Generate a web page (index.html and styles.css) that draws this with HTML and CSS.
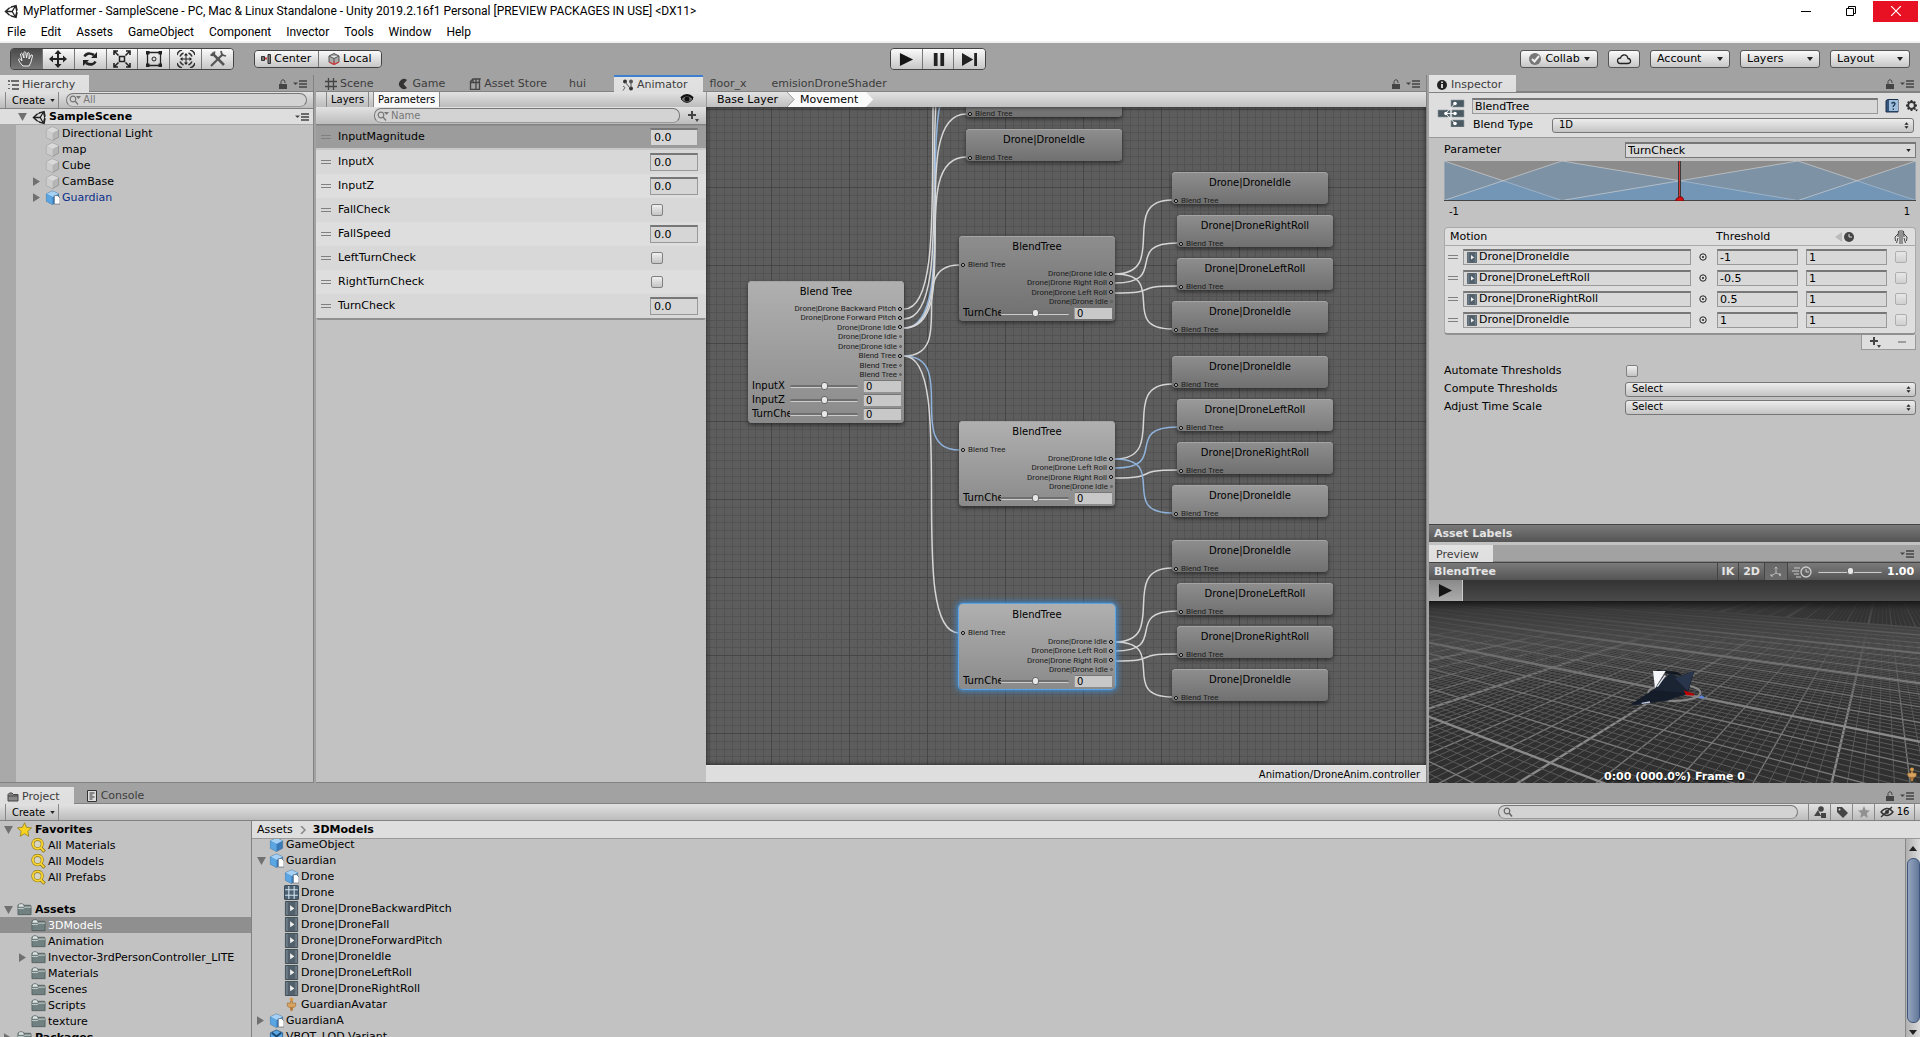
FILE: index.html
```html
<!DOCTYPE html>
<html lang="en">
<head>
<meta charset="utf-8">
<title>MyPlatformer - SampleScene - PC, Mac &amp; Linux Standalone - Unity 2019.2.16f1 Personal</title>
<link rel="stylesheet" href="styles.css">
</head>
<body>
<svg class="sprite" aria-hidden="true">
  <symbol id="unity" viewBox="0 0 16 16"><path d="M14.5.8 8.6 2.3l-.8 1.4H6.2L1.5 8l4.7 4.3h1.6l.8 1.4 5.9 1.5 1.2-5.800-1-1.400 1-1.400zM7.600 4.500 12 3l-2.500 4.300H4.600zM4.600 8.700h4.900L12 13l-4.400-1.500zM13 12.300 10.600 8 13 3.700l1 4.300z" fill="#222" fill-rule="evenodd"/></symbol>
  <symbol id="lock" viewBox="0 0 8 10"><path d="M2 5V2.500Q3-.2 5 1q1 .7 1 3" fill="none" stroke="#444"/><path d="M0 5h8v5H0z" fill="#444"/></symbol>
  <symbol id="pane" viewBox="0 0 14 8"><path d="M0 2.500h5L2.500 5z" fill="#444"/><path d="M6 1h8M6 4h8M6 7h8" stroke="#444" stroke-width="1.300"/></symbol>
  <symbol id="down" viewBox="0 0 6 4"><path d="M0 0h6L3 4z" fill="#222"/></symbol>
  <symbol id="updown" viewBox="0 0 6 8"><path d="M.5 3h5L3 0zM.5 5h5L3 8z" fill="#222"/></symbol>
  <symbol id="search" viewBox="0 0 12 10"><circle cx="4" cy="4" r="2.800" fill="none" stroke="#777" stroke-width="1.200"/><path d="m6 6 3 3.500" stroke="#777" stroke-width="1.400"/><path d="M7 1h5L9.500 4z" fill="#777"/></symbol>
  <symbol id="lens" viewBox="0 0 10 10"><circle cx="4" cy="4" r="2.800" fill="none" stroke="#666" stroke-width="1.200"/><path d="m6 6 3 3.500" stroke="#666" stroke-width="1.600"/></symbol>
  <symbol id="plus" viewBox="0 0 12 12"><path d="M5 1v8M1 5h8" stroke="#444" stroke-width="2"/><path d="M8 9h4l-2 3z" fill="#444"/></symbol>
  <symbol id="cube" viewBox="0 0 16 16"><path d="m8 1 6.500 3v8L8 15.500 1.500 12V4z" fill="#b5b5b5" stroke="#8e8e8e" stroke-width=".8"/><path d="m8 1 6.500 3L8 7.500 1.500 4z" fill="#dadada"/><path d="M1.500 4 8 7.500v8L1.500 12z" fill="#cdcdcd"/></symbol>
  <symbol id="bluecube" viewBox="0 0 16 16"><path d="m8 1 6.500 3v8L8 15.500 1.500 12V4z" fill="#3a7ab8" stroke="#456f94" stroke-width=".7"/><path d="m8 1 6.500 3L8 7.500 1.500 4z" fill="#a5d2f4"/><path d="M1.500 4 8 7.500v8L1.500 12z" fill="#5ba6e2"/></symbol>
  <symbol id="model" viewBox="0 0 16 16"><use href="#bluecube"/><path d="M10 6h3.500L16 8.500V15h-6z" fill="#fff" stroke="#68737c" stroke-width=".8"/></symbol>
  <symbol id="variant" viewBox="0 0 16 16"><path d="M8 1 14.500 4v8L8 15.500 1.500 12V4z" fill="#5ba6e2" stroke="#34658f"/><path d="m3 4 5 4 5-4M8 8v6" stroke="#174773" stroke-width="2" fill="none"/></symbol>
  <symbol id="folder" viewBox="0 0 16 14"><path d="M1 12V2.500L2.500 1H6l1.500 1.500h7L15 4v8.500H1z" fill="#718080" stroke="#4a5656" stroke-width=".8"/><path d="M1.500 4Q2 1.500 3 1.500h3L7.500 4z" fill="#dfe3e3"/><path d="M1 6h6l1.500-1.500H15" stroke="#c8d0d0" fill="none"/></symbol>
  <symbol id="find" viewBox="0 0 16 16"><path d="m10.500 10.500 4 4" stroke="#8d7410" stroke-width="3.600"/><circle cx="7" cy="6.500" r="5" fill="#d6d4c4" stroke="#8d7410" stroke-width="3.200"/><circle cx="7" cy="6.500" r="5" fill="none" stroke="#f8d633" stroke-width="2"/><path d="m10.500 10.500 3.500 3.500" stroke="#f8d633" stroke-width="2"/></symbol>
  <symbol id="clip" viewBox="0 0 14 16"><path d="M.5.5h13v15H.5z" fill="#51606a" stroke="#3f4b53"/><path d="M1 1h2v14H1zM11 1h2v14h-2z" fill="#6d7c86"/><path d="M5.500 4.500 10 8l-4.500 3z" fill="#f2f2f2"/></symbol>
  <symbol id="mesh" viewBox="0 0 14 14"><rect x=".5" y=".5" width="13" height="13" rx="1" fill="#4d6374" stroke="#3c4d5a"/><path d="M4.500 1v12M9.500 1v12M1 4.500h12M1 9.500h12" stroke="#d4e3ee"/></symbol>
  <symbol id="avatar" viewBox="0 0 10 16"><circle cx="5" cy="2.500" r="2" fill="#d99a4e"/><path d="M4 4.500h2v2h3.500v3L8 11H2L.5 9.500v-3H4z" fill="#d9a45f" stroke="#8f622d" stroke-width=".6"/><path d="M3 11h4l-1 4H4z" fill="#b87c3a"/></symbol>
  <symbol id="open" viewBox="0 0 10 9"><path d="M0 0h10L5 9z" fill="#707070"/></symbol>
  <symbol id="closed" viewBox="0 0 8 10"><path d="M0 0v10l8-5z" fill="#707070"/></symbol>
  <symbol id="target" viewBox="0 0 8 8"><circle cx="4" cy="4" r="3.200" fill="none" stroke="#222"/><circle cx="4" cy="4" r="1" fill="#222"/></symbol>
  <symbol id="play" viewBox="0 0 16 16"><path d="M1 1v14l14-7z" fill="#151515"/></symbol>
</svg>

<div class="app">
  <header class="top">
    <div class="titlebar">
      <svg class="i15"><use href="#unity"/></svg>
      <h1>MyPlatformer - SampleScene - PC, Mac &amp; Linux Standalone - Unity 2019.2.16f1 Personal [PREVIEW PACKAGES IN USE] &lt;DX11&gt;</h1>
      <div class="winbtns">
        <button aria-label="Minimize"><svg class="i10" viewBox="0 0 10 10"><path d="M0 5.500h10" stroke="#000"/></svg></button>
        <button aria-label="Restore"><svg class="i10" viewBox="0 0 10 10"><path d="M.5 2.500h7v7h-7zM2.500 2.500v-2h7v7h-2" fill="none" stroke="#000"/></svg></button>
        <button class="close" aria-label="Close"><svg class="i10" viewBox="0 0 10 10"><path d="m0 0 10 10M10 0 0 10" stroke="#fff" stroke-width="1.200"/></svg></button>
      </div>
    </div>
    <nav class="menubar">
      <button>File</button><button>Edit</button><button>Assets</button><button>GameObject</button><button>Component</button><button>Invector</button><button>Tools</button><button>Window</button><button>Help</button>
    </nav>
    <div class="toolbar">
      <div class="tb-left">
        <div class="group tall tools">
          <button class="on" aria-label="Hand"><svg class="i18" viewBox="0 0 18 18"><path d="M6 16C3 13 2 11 1.500 9.500q.5-1.500 2 0L5 11 3.500 4q1-1.500 2 0L7 8 6.800 2.500q1-1.500 2 0L9.500 8l1-5q1.300-1 1.700.5L12 9l2-4q1.500-.5 1.500 1L14 12l-2 4z" fill="#555" stroke="#eee"/></svg></button>
          <button aria-label="Move"><svg class="i18" viewBox="0 0 18 18"><path d="M9 0l3.500 4H10v4h4V5.500L18 9l-4 3.500V10h-4v4h2.500L9 18l-3.500-4H8v-4H4v2.500L0 9l4-3.500V8h4V4H5.500z" fill="#222"/></svg></button>
          <button aria-label="Rotate"><svg class="i18" viewBox="0 0 18 18"><path d="M3.500 6.500Q6 1.500 13 5M14.500 11.500Q12 16.500 5 13" fill="none" stroke="#222" stroke-width="2.600"/><path d="M16 2v6h-6zM2 16v-6h6z" fill="#222"/></svg></button>
          <button aria-label="Scale"><svg class="i18" viewBox="0 0 18 18"><path d="M1 5V1h4M13 1h4v4M17 13v4h-4M5 17H1v-4M1.500 1.500l4 4M16.500 1.500l-4 4M1.500 16.500l4-4M16.500 16.500l-4-4" stroke="#222" stroke-width="1.600" fill="none"/><path d="M6.500 6.500h5v5h-5z" fill="#ddd" stroke="#222" stroke-width="1.500"/></svg></button>
          <button aria-label="Rect"><svg class="i18" viewBox="0 0 18 18"><path d="M2.500 2.500h13v13h-13z" fill="none" stroke="#222" stroke-width="1.300"/><path d="M1 1h3.500v3.500H1zM13.500 1H17v3.500h-3.500zM1 13.500h3.500V17H1zM13.500 13.500H17V17h-3.500z" fill="#222"/><circle cx="9" cy="9" r="2" fill="none" stroke="#222"/></svg></button>
          <button aria-label="Transform"><svg class="i18" viewBox="0 0 18 18"><path d="M0 5Q1 1 5 0M13 0q4 1 5 5M18 13q-1 4-5 5M5 18q-4-1-5-5" stroke="#333" stroke-width="1.600" fill="none"/><path d="M3 6.500Q4 4 6.500 3M11.500 3Q14 4 15 6.500M15 11.500Q14 14 11.500 15M6.500 15Q4 14 3 11.500" stroke="#333" stroke-width="1.600" fill="none"/><path d="M9 5v8M5 9h8" stroke="#222"/><path d="m9 3 2 2.500H7zM9 15l2-2.500H7zM3 9l2.500-2v4zM15 9l-2.500-2v4z" fill="#222"/></svg></button>
          <button aria-label="Custom tools"><svg class="i18" viewBox="0 0 18 18"><path d="m3 3 12 12" stroke="#555" stroke-width="2.500"/><path d="M1.500 4.500Q5 7 5.500 1.500" stroke="#555" stroke-width="2" fill="none"/><path d="M14 4 6 12l-4 4" stroke="#555" stroke-width="2.200" fill="none"/><path d="m12 1 1 4 4 1" stroke="#555" stroke-width="1.800" fill="none"/></svg></button>
        </div>
        <div class="group pivot">
          <button><svg class="i10" viewBox="0 0 10 10"><path d="M.5 2.500h3v4h-3zM7 .5h2.500v9H7z" fill="#777" stroke="#333"/><path d="M4 4.500h2" stroke="#c33" stroke-width="2"/></svg>Center</button>
          <button><svg class="i12" viewBox="0 0 12 12"><path d="m6 .5 5 2.500v6l-5 2.500L1 9V3zM1 3l5 2.500L11 3M6 5.500v6" fill="#aaa" stroke="#555"/><path d="M1 9l5 2.500L11 9M6 8v3" stroke="#c44" stroke-width="1.300" fill="none"/></svg>Local</button>
        </div>
      </div>
      <div class="tb-mid">
        <div class="group tall playback">
          <button aria-label="Play"><svg class="i15"><use href="#play"/></svg></button>
          <button aria-label="Pause"><svg class="i15" viewBox="0 0 16 16"><path d="M3 1h4v14H3zM10 1h4v14h-4z" fill="#222"/></svg></button>
          <button aria-label="Step"><svg class="i15" viewBox="0 0 16 16"><path d="M0 1v14l12-7zM13 1h3v14h-3z" fill="#222"/></svg></button>
        </div>
      </div>
      <div class="tb-right">
        <button class="drop collab"><svg class="i12" viewBox="0 0 12 12"><circle cx="6" cy="6" r="6" fill="#777"/><path d="m3 6 2.500 2.500L10 3" stroke="#eee" stroke-width="2" fill="none"/></svg>Collab<svg class="arr"><use href="#down"/></svg></button>
        <button class="drop cloud" aria-label="Cloud"><svg viewBox="0 0 16 12" width="16" height="12"><path d="M4 10.500h8q3-.5 2.500-3Q14 5.500 12 5.500 11 1.500 7.500 2 5 2.500 4.500 5 1.500 5 1.500 8q.5 2.500 2.500 2.500z" fill="none" stroke="#222" stroke-width="1.300"/></svg></button>
        <button class="drop">Account<svg class="arr"><use href="#down"/></svg></button>
        <button class="drop">Layers<svg class="arr"><use href="#down"/></svg></button>
        <button class="drop">Layout<svg class="arr"><use href="#down"/></svg></button>
      </div>
    </div>
  </header>

  <main class="work">
    <section class="panel hierarchy">
      <div class="tabs">
        <button class="tab active"><svg class="i12" viewBox="0 0 12 12"><path d="M1 2h2M4 2h8M5 6h7M5 10h7M2 5v1M2 9v1" stroke="#444" stroke-width="1.500"/></svg>Hierarchy</button>
        <span class="tabtools"><svg class="lk"><use href="#lock"/></svg><svg class="pn"><use href="#pane"/></svg></span>
      </div>
      <div class="bar">
        <button class="create">Create<svg class="arr s"><use href="#down"/></svg></button>
        <label class="find grow"><svg class="sr"><use href="#search"/></svg><input aria-label="Search hierarchy" placeholder="All"></label>
      </div>
      <div class="hbody">
        <div class="scene"><svg class="fold"><use href="#open"/></svg><svg class="i15"><use href="#unity"/></svg><b>SampleScene</b><svg class="pn end"><use href="#pane"/></svg></div>
        <ul class="tree hlist">
          <li><i></i><svg class="i15"><use href="#cube"/></svg>Directional Light</li>
          <li><i></i><svg class="i15"><use href="#cube"/></svg>map</li>
          <li><i></i><svg class="i15"><use href="#cube"/></svg>Cube</li>
          <li><i><svg class="fc"><use href="#closed"/></svg></i><svg class="i15"><use href="#cube"/></svg>CamBase</li>
          <li class="prefab"><i><svg class="fc"><use href="#closed"/></svg></i><svg class="i15"><use href="#model"/></svg>Guardian</li>
        </ul>
      </div>
    </section>

    <section class="panel animator">
      <div class="tabs">
        <button class="tab first"><svg class="i12" viewBox="0 0 12 12"><path d="M3.500 0v12M8.500 0v12M0 3.500h12M0 8.500h12" stroke="#444" stroke-width="1.300"/></svg>Scene</button>
        <button class="tab"><svg class="i12" viewBox="0 0 12 12"><path d="M9 2A5 5 0 1 0 9 10L5.500 6z" fill="#333"/></svg>Game</button>
        <button class="tab"><svg class="i12" viewBox="0 0 12 12"><path d="M1.500 4.500h9v7h-9zM1 4l3-3h7l-1 3M4 1v3M7 1v10" fill="none" stroke="#444" stroke-width="1.300"/></svg>Asset Store</button>
        <button class="tab wide">hui</button>
        <button class="tab active focus"><svg class="i12" viewBox="0 0 12 12"><circle cx="3" cy="2.500" r="2" fill="#333"/><circle cx="9" cy="2.500" r="2" fill="#555"/><circle cx="9" cy="9.500" r="2" fill="#333"/><path d="m3 3 5 6M9 3v6" stroke="#555"/><path d="m1 7 2 1.500-2 3" stroke="#666" fill="none"/></svg>Animator</button>
        <button class="tab slim">floor_x</button>
        <button class="tab">emisionDroneShader</button>
        <span class="tabtools"><svg class="lk"><use href="#lock"/></svg><svg class="pn"><use href="#pane"/></svg></span>
      </div>
      <div class="asplit">
        <div class="params">
          <div class="bar pbar"><button class="seg">Layers</button><button class="seg on">Parameters</button><svg class="eye" viewBox="0 0 14 10"><path d="M1 5q6-7 12 0-6 7-12 0z" fill="#777" stroke="#222"/><circle cx="7" cy="5" r="2.500" fill="#111"/><path d="M1 4q6-6 12 0" stroke="#111" stroke-width="2" fill="none"/></svg></div>
          <div class="bar pfind"><label class="find grow"><svg class="sr"><use href="#search"/></svg><input aria-label="Search parameters" placeholder="Name"></label><button class="add" aria-label="Add parameter"><svg class="i12"><use href="#plus"/></svg></button></div>
          <ul class="plist">
            <li class="sel"><span class="grip"></span><label for="p1">InputMagnitude</label><input id="p1" class="num" value="0.0"></li>
            <li><span class="grip"></span><label for="p2">InputX</label><input id="p2" class="num" value="0.0"></li>
            <li><span class="grip"></span><label for="p3">InputZ</label><input id="p3" class="num" value="0.0"></li>
            <li><span class="grip"></span><label for="p4">FallCheck</label><span class="cell"><input id="p4" type="checkbox"></span></li>
            <li><span class="grip"></span><label for="p5">FallSpeed</label><input id="p5" class="num" value="0.0"></li>
            <li><span class="grip"></span><label for="p6">LeftTurnCheck</label><span class="cell"><input id="p6" type="checkbox"></span></li>
            <li><span class="grip"></span><label for="p7">RightTurnCheck</label><span class="cell"><input id="p7" type="checkbox"></span></li>
            <li><span class="grip"></span><label for="p8">TurnCheck</label><input id="p8" class="num" value="0.0"></li>
          </ul>
        </div>
        <div class="graph">
          <nav class="crumbs"><button>Base Layer</button><svg class="chev" viewBox="0 0 10 15" preserveAspectRatio="none"><path d="M0 0 8 7.500 0 15h10V0z" fill="#fafafa"/><path d="m0 0 8 7.500L0 15" fill="none" stroke="#999"/></svg><button class="on">Movement</button><svg class="chev" viewBox="0 0 10 15" preserveAspectRatio="none"><path d="m0 0 8 7.500L0 15z" fill="#fafafa"/></svg></nav>
          <div class="canvas">
            <svg class="wires" aria-hidden="true">
              <defs><pattern id="grid" x="65" y="80" width="78" height="78" patternUnits="userSpaceOnUse"><g fill="#535353"><path d="M8 0h1v78H8zM16 0h1v78h-1zM23 0h1v78h-1zM31 0h1v78h-1zM39 0h1v78h-1zM47 0h1v78h-1zM55 0h1v78h-1zM62 0h1v78h-1zM70 0h1v78h-1z"/><path d="M0 8v1h78V8zM0 16v1h78v-1zM0 23v1h78v-1zM0 31v1h78v-1zM0 39v1h78v-1zM0 47v1h78v-1zM0 55v1h78v-1zM0 62v1h78v-1zM0 70v1h78v-1z"/></g><path d="M0 0h1v78H0zM0 0h78v1H0z" fill="#464646"/></pattern></defs>
              <rect width="100%" height="100%" fill="#5d5d5d"/><rect width="100%" height="100%" fill="url(#grid)"/>
              <g fill="none" stroke="#d6d6d6" stroke-width="1.500">
                <path d="M198 202C256 202 196-122 260-122"/>
                <path d="M198 212C258 212 198-79 260-79"/>
                <path class="live" d="M198 221C260 221 198-36 260-36"/>
                <path d="M198 221C260 221 198 7 260 7"/>
                <path d="M198 221C260 221 198 50 260 50"/>
                <path d="M198 249C253 249 198 158 253 158"/>
                <path class="live" d="M198 249C253 249 198 343 253 343"/>
                <path d="M198 249C253 249 198 526 253 526"/>
                <path d="M409 167C464 167 411 93 466 93"/>
                <path d="M409 176C464 176 416 136 471 136"/>
                <path d="M409 186C456 186 424 179 471 179"/>
                <path d="M409 167C464 167 411 222 466 222"/>
                <path d="M409 352C464 352 411 277 466 277"/>
                <path class="live" d="M409 361C464 361 416 320 471 320"/>
                <path d="M409 371C456 371 424 363 471 363"/>
                <path class="live" d="M409 352C464 352 411 406 466 406"/>
                <path d="M409 535C464 535 411 461 466 461"/>
                <path d="M409 544C464 544 416 504 471 504"/>
                <path d="M409 554C456 554 424 547 471 547"/>
                <path d="M409 535C464 535 411 590 466 590"/>
              </g>
            </svg>
            <article class="node leaf c2 t1"><h2>Drone|DroneForwardPitch</h2><p class="in">Blend Tree</p></article>
            <article class="node leaf c2 t2"><h2>Drone|DroneIdle</h2><p class="in">Blend Tree</p></article>
            <article class="node root lit"><h2>Blend Tree</h2>
              <ul class="outs"><li>Drone|Drone Backward Pitch</li><li>Drone|Drone Forward Pitch</li><li>Drone|Drone Idle</li><li class="off">Drone|Drone Idle</li><li class="off">Drone|Drone Idle</li><li>Blend Tree</li><li class="off">Blend Tree</li><li class="off">Blend Tree</li></ul>
              <div class="prm"><label for="n1">InputX</label><input type="range" aria-label="InputX slider"><input id="n1" value="0"></div>
              <div class="prm"><label for="n2">InputZ</label><input type="range" aria-label="InputZ slider"><input id="n2" value="0"></div>
              <div class="prm"><label for="n3">TurnCheck</label><input type="range" aria-label="TurnCheck slider"><input id="n3" value="0"></div>
            </article>
            <article class="node tree1 c1"><h2>BlendTree</h2><p class="in">Blend Tree</p>
              <ul class="outs"><li>Drone|Drone Idle</li><li>Drone|Drone Right Roll</li><li>Drone|Drone Left Roll</li><li class="off">Drone|Drone Idle</li></ul>
              <div class="prm"><label for="n4">TurnCheck</label><input type="range" aria-label="TurnCheck slider"><input id="n4" value="0"></div>
            </article>
            <article class="node tree2 c1 lit"><h2>BlendTree</h2><p class="in">Blend Tree</p>
              <ul class="outs"><li>Drone|Drone Idle</li><li>Drone|Drone Left Roll</li><li>Drone|Drone Right Roll</li><li class="off">Drone|Drone Idle</li></ul>
              <div class="prm"><label for="n5">TurnCheck</label><input type="range" aria-label="TurnCheck slider"><input id="n5" value="0"></div>
            </article>
            <article class="node tree3 c1 lit picked"><h2>BlendTree</h2><p class="in">Blend Tree</p>
              <ul class="outs"><li>Drone|Drone Idle</li><li>Drone|Drone Left Roll</li><li>Drone|Drone Right Roll</li><li class="off">Drone|Drone Idle</li></ul>
              <div class="prm"><label for="n6">TurnCheck</label><input type="range" aria-label="TurnCheck slider"><input id="n6" value="0"></div>
            </article>
            <article class="node leaf c3 a1"><h2>Drone|DroneIdle</h2><p class="in">Blend Tree</p></article>
            <article class="node leaf c4 a2"><h2>Drone|DroneRightRoll</h2><p class="in">Blend Tree</p></article>
            <article class="node leaf c4 a3"><h2>Drone|DroneLeftRoll</h2><p class="in">Blend Tree</p></article>
            <article class="node leaf c3 a4"><h2>Drone|DroneIdle</h2><p class="in">Blend Tree</p></article>
            <article class="node leaf c3 b1"><h2>Drone|DroneIdle</h2><p class="in">Blend Tree</p></article>
            <article class="node leaf c4 b2 warm"><h2>Drone|DroneLeftRoll</h2><p class="in">Blend Tree</p></article>
            <article class="node leaf c4 b3"><h2>Drone|DroneRightRoll</h2><p class="in">Blend Tree</p></article>
            <article class="node leaf c3 b4 warm"><h2>Drone|DroneIdle</h2><p class="in">Blend Tree</p></article>
            <article class="node leaf c3 d1"><h2>Drone|DroneIdle</h2><p class="in">Blend Tree</p></article>
            <article class="node leaf c4 d2"><h2>Drone|DroneLeftRoll</h2><p class="in">Blend Tree</p></article>
            <article class="node leaf c4 d3"><h2>Drone|DroneRightRoll</h2><p class="in">Blend Tree</p></article>
            <article class="node leaf c3 d4"><h2>Drone|DroneIdle</h2><p class="in">Blend Tree</p></article>
          </div>
          <footer class="status">Animation/DroneAnim.controller</footer>
        </div>
      </div>
    </section>

    <section class="panel inspector">
      <div class="tabs">
        <button class="tab active"><svg class="i12" viewBox="0 0 12 12"><circle cx="6" cy="6" r="5" fill="#222"/><path d="M6 5v4M6 2.500v1.500" stroke="#fff" stroke-width="1.600"/></svg>Inspector</button>
        <span class="tabtools"><svg class="lk"><use href="#lock"/></svg><svg class="pn"><use href="#pane"/></svg></span>
      </div>
      <div class="ihead">
        <svg class="bt" viewBox="0 0 28 28"><g fill="#4b5a62" stroke="#8b979d" stroke-width=".6"><path d="M14 1h13v7H14zM1 11h12v7H1zM15 11h12v7H15zM14 21h13v7H14z"/></g><path d="m9 14 9-9.500M9 14.500h9M9 15l9 9.500" stroke="#eee" fill="none"/><g fill="#fff"><circle cx="9" cy="14.500" r="1.800"/><circle cx="18" cy="4.500" r="1.800"/><circle cx="18" cy="14.500" r="1.800"/><circle cx="18" cy="24.500" r="1.800"/></g></svg>
        <div class="ihfields">
          <div class="irow"><input class="text grow" aria-label="Name" value="BlendTree"><svg class="help" viewBox="0 0 14 14"><path d="M1 1.500 3 .5h10v12.500H1z" fill="#34557c" stroke="#1c314c"/><path d="M4 1h9v11H4z" fill="#9fbedb"/><path d="M6.500 4.500q2-2 3.500 0 0 1.500-1.700 2.500v1M8.300 9.500V11" stroke="#1c3655" stroke-width="1.300" fill="none"/></svg><svg class="i12" viewBox="0 0 12 12"><circle cx="5.500" cy="5.500" r="3.400" fill="none" stroke="#333" stroke-width="2"/><path d="M5.500 0v2M5.500 9v2M0 5.500h2M9 5.500h2M1.700 1.700l1.300 1.300M8 8l1.300 1.300M1.700 9.300 3 8M8 3l1.300-1.300" stroke="#333" stroke-width="1.800"/><path d="M9 9.500h3l-1.500 2z" fill="#222"/></svg></div>
          <div class="irow"><label class="btype" for="bt">Blend Type</label><span class="pick grow"><select id="bt"><option>1D</option></select><svg class="ud"><use href="#updown"/></svg></span></div>
        </div>
      </div>
      <div class="ibody">
        <div class="field"><label for="prm">Parameter</label><span class="pick combo"><select id="prm"><option>TurnCheck</option></select><svg class="arr s"><use href="#down"/></svg></span></div>
        <svg class="chart" viewBox="0 0 472 40" preserveAspectRatio="none"><rect width="472" height="40" fill="#8c8c8c"/>
          <g fill="#5f9fdb" fill-opacity=".32" stroke="#d8d8d8" stroke-opacity=".6" stroke-width="1"><path d="M0 0 118 39.500H0z"/><path d="M0 39.500 118 0l236 39.500z"/><path d="M118 39.500 354 0l118 39.500z"/><path d="M354 39.500 472 0v39.500z"/></g>
          <path d="M0 39.500h472" stroke="#444"/><path d="M234 0h1v37h-1zM236 0h1v37h-1z" fill="#3a3a3a"/><path d="M235 0h1v37h-1z" fill="#d83838"/><path d="M231.500 40q0-3 4-4t4 4z" fill="#e01010" stroke="#611"/></svg>
        <div class="range"><span>-1</span><span>1</span></div>
        <table class="motions">
          <thead><tr><th class="mt" colspan="3">Motion</th><th>Threshold</th><th class="ck"><svg viewBox="0 0 20 12" width="20" height="12"><path d="M7 1v10L0 6z" fill="#bbb"/><circle cx="14" cy="6" r="5" fill="#444"/><path d="M14 3v3h3" stroke="#ddd" fill="none"/></svg></th><th class="mir"><svg viewBox="0 0 14 14" width="14" height="14"><path d="M6 0v14M8 0v14M4.500 1 4 7M9.500 1l.5 6M4 4 1 7l.5 4M10 4l3 3-.5 4M4 8l-1.500 5M10 8l1.500 5" stroke="#444" fill="none"/></svg></th></tr></thead>
          <tbody>
            <tr><td class="g"><span class="grip"></span></td><td class="m"><span class="obj"><svg class="cl"><use href="#clip"/></svg>Drone|DroneIdle</span></td><td class="o"><svg class="i8"><use href="#target"/></svg></td><td class="n"><input aria-label="Threshold 1" value="-1"></td><td class="n"><input aria-label="Speed 1" value="1"></td><td class="x"><input type="checkbox" aria-label="Mirror 1"></td></tr>
            <tr><td class="g"><span class="grip"></span></td><td class="m"><span class="obj"><svg class="cl"><use href="#clip"/></svg>Drone|DroneLeftRoll</span></td><td class="o"><svg class="i8"><use href="#target"/></svg></td><td class="n"><input aria-label="Threshold 2" value="-0.5"></td><td class="n"><input aria-label="Speed 2" value="1"></td><td class="x"><input type="checkbox" aria-label="Mirror 2"></td></tr>
            <tr><td class="g"><span class="grip"></span></td><td class="m"><span class="obj"><svg class="cl"><use href="#clip"/></svg>Drone|DroneRightRoll</span></td><td class="o"><svg class="i8"><use href="#target"/></svg></td><td class="n"><input aria-label="Threshold 3" value="0.5"></td><td class="n"><input aria-label="Speed 3" value="1"></td><td class="x"><input type="checkbox" aria-label="Mirror 3"></td></tr>
            <tr><td class="g"><span class="grip"></span></td><td class="m"><span class="obj"><svg class="cl"><use href="#clip"/></svg>Drone|DroneIdle</span></td><td class="o"><svg class="i8"><use href="#target"/></svg></td><td class="n"><input aria-label="Threshold 4" value="1"></td><td class="n"><input aria-label="Speed 4" value="1"></td><td class="x"><input type="checkbox" aria-label="Mirror 4"></td></tr>
          </tbody>
        </table>
        <div class="mfoot"><button aria-label="Add motion"><svg class="i12"><use href="#plus"/></svg></button><button aria-label="Remove motion"><svg class="i10" viewBox="0 0 10 10"><path d="M1 5h8" stroke="#888" stroke-width="1.500"/></svg></button></div>
        <div class="field"><label for="au">Automate Thresholds</label><span class="cb"><input id="au" type="checkbox"></span></div>
        <div class="field"><label for="ct">Compute Thresholds</label><span class="pick small"><select id="ct"><option>Select</option></select><svg class="ud"><use href="#updown"/></svg></span></div>
        <div class="field"><label for="at">Adjust Time Scale</label><span class="pick small"><select id="at"><option>Select</option></select><svg class="ud"><use href="#updown"/></svg></span></div>
      </div>
      <div class="darkbar labels">Asset Labels</div>
      <div class="tabs ptabs"><button class="tab active plain">Preview</button><span class="tabtools"><svg class="pn"><use href="#pane"/></svg></span></div>
      <div class="darkbar phead"><span class="grow">BlendTree</span><button>IK</button><button>2D</button><button class="on" aria-label="Pivot"><svg class="i12" viewBox="0 0 12 12"><path d="M6 1v6M6 7l5 2M6 7l-5 3M4.500 2.500 6 1l1.500 1.500M9.500 7l1.500 2-2 1M1 8v2h2" stroke="#bbb" fill="none"/></svg></button>
        <svg class="spd" viewBox="0 0 20 12"><circle cx="14" cy="6" r="5" fill="none" stroke="#ccc" stroke-width="1.300"/><path d="M14 3v3h3M2 2h6M0 5h7M2 8h5M4 11h5" stroke="#ccc" fill="none"/></svg><input type="range" class="speed" aria-label="Playback speed"><output>1.00</output></div>
      <div class="pplay"><button aria-label="Play preview"><svg class="i15"><use href="#play"/></svg></button></div>
      <div class="preview">
        <svg class="view" viewBox="87 303 1473 546" preserveAspectRatio="xMidYMax slice">
          <defs><linearGradient id="fog" x1="0" y1="0" x2="0" y2="1"><stop offset="0" stop-color="#181818"/><stop offset=".05" stop-color="#333" stop-opacity=".85"/><stop offset=".25" stop-color="#3a3a3a" stop-opacity=".4"/><stop offset=".7" stop-color="#333" stop-opacity="0"/></linearGradient></defs>
          <rect x="0" y="200" width="1700" height="700" fill="#303030"/>
          <g id="floor"></g>
          <rect x="87" y="303" width="1473" height="546" fill="url(#fog)"/>
          <ellipse cx="823" cy="578" rx="78" ry="25" fill="none" stroke="#888" stroke-width="6"/>
          <path d="m770 510 60 5 20 12-80-12z" fill="#111822"/>
          <path d="m760 570 50-50 25 10 48-18-20 70-60 20-113 15z" fill="#1b2433"/><path d="m690 614 70-44 100 10-60 20z" fill="#151c29"/><path d="m825 535 58-23-20 60z" fill="#28354a"/>
          <path d="M759 513h38l-32 52z" fill="#f4f6fa"/><path d="m772 560 24-34" stroke="#dfe6f4" stroke-width="4"/><path d="m856 575 26 9-22-1z" stroke="#b00" stroke-width="5" fill="#b00"/><path d="m905 585 12 10h-24z" fill="#5b83d8"/><path d="M725 610l25-4" stroke="#c3cbe0" stroke-width="4"/>
        </svg>
        <p class="frame">0:00 (000.0%) Frame 0</p>
        <svg class="pav"><use href="#avatar"/></svg>
      </div>
    </section>
  </main>

  <section class="project">
    <div class="tabs">
      <button class="tab active"><svg class="i12" viewBox="0 0 12 12"><path d="M1 10V3.500L2.500 2H5l1.500 1.500H11V10z" fill="#888" stroke="#444"/><path d="M1 5h10" stroke="#444"/></svg>Project</button>
      <button class="tab"><svg class="i12" viewBox="0 0 12 12"><path d="M1.500.5h9v11h-9z" fill="#ddd" stroke="#333"/><path d="M3.500 3h5M3.500 5h3M3.500 7h5M3.500 9h3" stroke="#333"/></svg>Console</button>
      <span class="tabtools"><svg class="lk"><use href="#lock"/></svg><svg class="pn"><use href="#pane"/></svg></span>
    </div>
    <div class="bar projbar">
      <button class="create">Create<svg class="arr s"><use href="#down"/></svg></button>
      <label class="find pf"><svg class="i10"><use href="#lens"/></svg><input aria-label="Search project"></label>
      <div class="pbtns">
        <button aria-label="Search by type"><svg class="i12" viewBox="0 0 12 12"><circle cx="7" cy="3" r="2.800" fill="#444"/><path d="M0 10 4 4l3 6zM7 7h5v5H7z" fill="#444"/></svg></button>
        <button aria-label="Search by label"><svg class="i12" viewBox="0 0 12 12"><path d="M1 1h5l6 6-5 5-6-6z" fill="#444"/><circle cx="3.500" cy="3.500" r="1" fill="#ddd"/></svg></button>
        <button aria-label="Save search"><svg class="i12" viewBox="0 0 12 12"><path d="m6 0 1.800 4.200L12 4.500 8.800 7.300 9.800 12 6 9.500 2.200 12l1-4.700L0 4.500l4.200-.3z" fill="#909090"/></svg></button>
        <button class="hid"><svg viewBox="0 0 14 12" width="14" height="12"><path d="M1 6q6-7 12 0-6 7-12 0zM1 11 12 1" fill="none" stroke="#333" stroke-width="1.300"/><circle cx="7" cy="6" r="2" fill="#333"/></svg>16</button>
      </div>
    </div>
    <div class="psplit">
      <ul class="tree folders">
        <li class="top0"><i><svg class="fold"><use href="#open"/></svg></i><svg class="i15" viewBox="0 0 16 16"><path d="m8 .8 2.200 4.900 5.300.6-4 3.600 1.100 5.300L8 12.500l-4.600 2.700 1.100-5.300-4-3.600 5.300-.6z" fill="#f8d420" stroke="#8f7a1a" stroke-width=".8"/></svg><b>Favorites</b></li>
        <li><i></i><svg class="i15"><use href="#find"/></svg>All Materials</li>
        <li><i></i><svg class="i15"><use href="#find"/></svg>All Models</li>
        <li><i></i><svg class="i15"><use href="#find"/></svg>All Prefabs</li>
        <li></li>
        <li class="top0"><i><svg class="fold"><use href="#open"/></svg></i><svg class="i15"><use href="#folder"/></svg><b>Assets</b></li>
        <li class="sel"><i></i><svg class="i15"><use href="#folder"/></svg>3DModels</li>
        <li><i></i><svg class="i15"><use href="#folder"/></svg>Animation</li>
        <li><i><svg class="fc"><use href="#closed"/></svg></i><svg class="i15"><use href="#folder"/></svg>Invector-3rdPersonController_LITE</li>
        <li><i></i><svg class="i15"><use href="#folder"/></svg>Materials</li>
        <li><i></i><svg class="i15"><use href="#folder"/></svg>Scenes</li>
        <li><i></i><svg class="i15"><use href="#folder"/></svg>Scripts</li>
        <li><i></i><svg class="i15"><use href="#folder"/></svg>texture</li>
        <li class="top0"><i><svg class="fc"><use href="#closed"/></svg></i><svg class="i15"><use href="#folder"/></svg><b>Packages</b></li>
      </ul>
      <div class="assets">
        <nav class="path"><a href="#assets">Assets</a><svg class="gt" viewBox="0 0 6 8"><path d="m1 0 4 4-4 4" fill="none" stroke="#888" stroke-width="1.500"/></svg><b>3DModels</b></nav>
        <div class="lwrap">
          <ul class="tree files">
            <li><i></i><svg class="i15"><use href="#bluecube"/></svg>GameObject</li>
            <li><i><svg class="fold"><use href="#open"/></svg></i><svg class="i15"><use href="#model"/></svg>Guardian</li>
            <li class="kid"><i></i><svg class="i15"><use href="#model"/></svg>Drone</li>
            <li class="kid"><i></i><svg class="i15"><use href="#mesh"/></svg>Drone</li>
            <li class="kid"><i></i><svg class="i15"><use href="#clip"/></svg>Drone|DroneBackwardPitch</li>
            <li class="kid"><i></i><svg class="i15"><use href="#clip"/></svg>Drone|DroneFall</li>
            <li class="kid"><i></i><svg class="i15"><use href="#clip"/></svg>Drone|DroneForwardPitch</li>
            <li class="kid"><i></i><svg class="i15"><use href="#clip"/></svg>Drone|DroneIdle</li>
            <li class="kid"><i></i><svg class="i15"><use href="#clip"/></svg>Drone|DroneLeftRoll</li>
            <li class="kid"><i></i><svg class="i15"><use href="#clip"/></svg>Drone|DroneRightRoll</li>
            <li class="kid"><i></i><svg class="i15"><use href="#avatar"/></svg>GuardianAvatar</li>
            <li><i><svg class="fc"><use href="#closed"/></svg></i><svg class="i15"><use href="#model"/></svg>GuardianA</li>
            <li><i></i><svg class="i15"><use href="#variant"/></svg>VBOT_LOD Variant</li>
          </ul>
          <div class="scroll"><svg class="sa" viewBox="0 0 8 5"><path d="M0 5h8L4 0z" fill="#222"/></svg><div class="thumb"></div><svg class="sa" viewBox="0 0 8 5"><path d="M0 0h8L4 5z" fill="#222"/></svg></div>
        </div>
      </div>
    </div>
  </section>
</div>
<script src="script.js"></script>
</body>
</html>
```
FILE: styles.css
```css
*, ::before, ::after { box-sizing: border-box; }
body { margin: 0; font: 11px/16px "DejaVu Sans", Verdana, sans-serif; color: #000; background: #a2a2a2; overflow: hidden; }
button, input, select { font: inherit; color: inherit; margin: 0; padding: 0; border: 0; background: none; border-radius: 0; outline: 0; min-width: 0; }
button { white-space: nowrap; }
ul { list-style: none; margin: 0; padding: 0; }
h1, h2, p { margin: 0; font-weight: normal; }
svg { flex: none; display: block; }
select { appearance: none; }
.sprite { display: none; }
.grow { flex: 1; }
.end { margin-left: auto; }
.i8 { width: 8px; height: 8px; }
.i10 { width: 10px; height: 10px; }
.i12 { width: 12px; height: 12px; }
.i15 { width: 15px; height: 15px; }
.i18 { width: 18px; height: 18px; }
.arr { width: 6px; height: 4px; }
.arr.s { width: 5px; height: 3px; }
.fold { width: 9px; height: 8px; }
.fc { width: 7px; height: 9px; }
.lk { width: 8px; height: 10px; }
.pn { width: 14px; height: 8px; }
.sr { width: 12px; height: 10px; }
.ud { width: 5px; height: 7px; }

.app { height: 100vh; display: grid; grid-template-rows: 75px minmax(0, 712fr) minmax(0, 250fr); }

/* window chrome */
.titlebar { display: flex; align-items: center; height: 22px; padding-left: 3px; gap: 5px; background: #fff; }
.titlebar h1 { font: 12px/22px Roboto, "Liberation Sans", sans-serif; white-space: nowrap; }
.winbtns { display: flex; margin-left: auto; padding-right: 2px; }
.winbtns button { width: 45px; height: 21px; display: grid; place-items: center; }
.winbtns .close { background: #e81123; }
.menubar { display: flex; height: 21px; gap: 15px; padding-left: 7px; background: #fff; border-bottom: 2px solid #f0f0f0; }
.menubar button { font: 12px/21px Roboto, "Liberation Sans", sans-serif; height: 19px; }
.toolbar { display: grid; grid-template-columns: 1fr 140px 1fr; height: 32px; padding: 5px 10px 0; align-items: start; background: #a2a2a2; }
.tb-left { display: flex; gap: 20px; }
.group { display: flex; border: 1px solid #444; border-radius: 4px; overflow: hidden; }
.group button { display: flex; flex: 1; align-items: center; justify-content: center; gap: 3px; background: linear-gradient(#fafafa, #c6c6c6); border-right: 1px solid #777; }
.group button:last-child { border-right: 0; }
.group.tall button { height: 20px; }
.tools { width: 224px; }
.playback { width: 96px; }
.group .on { background: linear-gradient(#4a4a4a, #777); }
.pivot { width: 128px; margin-top: 2px; align-self: start; }
.pivot button { height: 16px; }
.tb-mid { display: flex; }
.tb-right { display: flex; justify-content: flex-end; gap: 10px; padding-top: 2px; }
.drop { display: flex; align-items: center; justify-content: space-between; width: 80px; height: 18px; padding: 0 6px; background: linear-gradient(#fafafa, #c6c6c6); border: 1px solid #555; border-radius: 3px; }
.collab { width: 78px; padding: 0 7px 0 8px; }
.cloud { width: 32px; justify-content: center; }

/* docks */
.work { display: grid; grid-template-columns: minmax(0, 314fr) minmax(0, 1111fr) minmax(0, 491fr); gap: 2px; padding-bottom: 4px; min-height: 0; }
.panel { display: flex; flex-direction: column; min-height: 0; min-width: 0; background: #c2c2c2; border-bottom: 1px solid #828282; border-right: 1px solid #828282; }
.tabs { display: flex; align-items: stretch; height: 17px; background: #a2a2a2; border-bottom: 1px solid #828282; flex: none; }
.tab { display: flex; align-items: center; gap: 3px; padding: 2px 12px 0; color: #3c3c3c; }
.tab.active { padding: 2px 14px 0 7px; background: linear-gradient(#e2e2e2, #dedede); height: 17px; }
.tab.first { padding-left: 9px; }
.tab.wide { padding: 2px 28px 0 10px; }
.tab.slim { padding-left: 7px; padding-right: 13px; }
.tab.active.focus { padding: 0 15px 0 8px; border-top: 2px solid #3f7fcf; }
.tabtools { display: flex; align-items: center; gap: 6px; margin-left: auto; padding: 1px 6px 0 0; }
.bar { display: flex; align-items: stretch; height: 17px; background: linear-gradient(#e2e2e2, #bcbcbc); border-bottom: 1px solid #828282; flex: none; }
.create { display: flex; align-items: center; gap: 5px; margin-left: 5px; padding: 1px 3px 0 6px; border: solid #888; border-width: 0 1px; font-size: 10px; }
.find { display: flex; align-items: center; gap: 2px; height: 14px; margin: 1px 0; padding: 0 6px 0 4px; background: #d3d3d3; border: 1px solid #777; border-bottom-color: #999; border-radius: 7px; overflow: hidden; }
.find input { flex: 1; width: 0; height: 12px; line-height: 12px; font-size: 10px; }
.find input::placeholder { color: #777; opacity: 1; }

.tree li { display: flex; align-items: center; height: 16px; padding-top: 1px; gap: 2px; white-space: nowrap; }
.tree i { flex: none; display: flex; align-items: center; width: 12px; }
.hierarchy .find { margin: 1px 6px 0 7px; padding-left: 2px; }
.hbody { flex: 1; display: flex; flex-direction: column; }
.scene { display: flex; align-items: center; gap: 3px; height: 16px; padding: 1px 4px 0 18px; background: #dedede; border-bottom: 1px solid #a8a8a8; }
.scene .fold { margin-right: 1px; }
.hlist { flex: 1; border-left: 16px solid #a9a9a9; }
.hlist li { padding-left: 17px; }
.hlist i { width: 10px; }
.prefab { color: #0b2f8c; }

/* animator */
.asplit { flex: 1; display: grid; grid-template-columns: minmax(0, 390fr) minmax(0, 720fr); min-height: 0; }
.params { display: flex; flex-direction: column; min-height: 0; }
.pbar { height: 15px; padding-left: 10px; border-bottom: 0; }
.seg { font-size: 10px; padding: 0 4px; border-left: 1px solid #888; border-right: 1px solid #888; line-height: 15px; }
.seg.on { background: #f8f8f8; margin-left: 4px; }
.eye { width: 14px; height: 10px; margin: 2px 12px 0 auto; }
.pfind { height: 18px; padding-left: 58px; }
.pfind .find { padding-left: 2px; height: 15px; }
.add { width: 26px; display: grid; place-items: center; }
.plist { border: 1px solid #909090; border-width: 1px 0 2px; border-radius: 0 0 3px 3px; background: #d8d8d8; }
.plist li { display: flex; align-items: center; height: 24px; padding: 0 8px 0 5px; background: #d8d8d8; }
.plist li:nth-child(odd) { background: #dedede; }
.plist li.sel { background: #9c9c9c; border-bottom: 2px solid #c8c8c8; }
.plist label { flex: 1; margin-left: 7px; }
.grip { width: 10px; height: 4px; border: solid #808080; border-width: 1px 0; display: block; }
.num { width: 48px; height: 18px; padding: 0 3px; background: #d6d6d6; border: 1px solid #999; border-top: 2px solid #777; line-height: 14px; }
.cell { width: 47px; display: flex; }
input[type=checkbox] { appearance: none; width: 12px; height: 12px; border: 1px solid #808080; border-radius: 2px; background: linear-gradient(#f0f0f0, #c4c4c4); }

.graph { display: flex; flex-direction: column; min-height: 0; }
.crumbs { display: flex; height: 15px; background: linear-gradient(#e2e2e2, #bfbfbf); border-left: 1px solid #999; flex: none; }
.crumbs button { padding: 0 9px 0 10px; line-height: 15px; }
.crumbs button.on { background: #fafafa; padding: 0 8px 0 4px; }
.chev { width: 9px; height: 15px; }
.canvas { position: relative; flex: 1; overflow: hidden; background: #5d5d5d; }
.canvas::after { content: ""; position: absolute; inset: 0; box-shadow: inset 0 0 5px #222; pointer-events: none; }
.wires { position: absolute; width: 100%; height: 100%; }
.live { stroke: #8fb3dc; }
.status { height: 17px; background: #dedede; border-top: 1px solid #e8e8e8; text-align: right; padding: 1px 6px 0 0; font-size: 10px; flex: none; }

.node { position: absolute; width: 156px; height: 85px; border-radius: 4px; background: linear-gradient(#8e8e8e, #707070); box-shadow: 0 2px 4px rgba(0, 0, 0, .5), inset 0 1px #a4a4a4; }
.node.lit { background: linear-gradient(#b0b0b0, #8a8a8a); }
.node.warm { background: linear-gradient(#9a9a9a, #7c7c7c); }
.node.leaf { height: 32px; }
.node.picked { box-shadow: 0 0 0 1px #58a6e8, 0 0 6px 2px #3f8ed8; }
.node h2 { font: 10px/22px "DejaVu Sans", Verdana, sans-serif; text-align: center; height: 22px; }
.in, .outs { font: 8px/9px Roboto, "Liberation Sans", sans-serif; color: #1c1c1c; }
.in { display: flex; align-items: center; gap: 3px; height: 9px; padding-left: 2px; margin-top: 2px; }
.in::before, .outs li::after { content: ""; width: 4px; height: 4px; border-radius: 2px; background: #ddd; border: 1px solid #000; }
.outs { display: flex; flex-direction: column; justify-content: space-between; height: 37px; }
.root .outs { height: 75px; margin-top: 1px; }
.outs li { display: flex; align-items: center; justify-content: flex-end; gap: 2px; height: 9px; padding-right: 2px; }
.outs .off::after { width: 3px; height: 3px; border-color: #555; background: #777; }
.prm { display: flex; align-items: center; height: 14px; padding: 0 3px 0 4px; font-size: 10px; line-height: 14px; }
.prm label { width: 38px; overflow: hidden; white-space: nowrap; }
.prm input { width: 38px; height: 12px; padding: 0 2px; background: #c8c8c8; border-top: 1px solid #777; border-left: 1px solid #999; line-height: 11px; }
.prm input[type=range] { width: 68px; margin-right: 5px; }
input[type=range] { appearance: none; background: none; border: 0; padding: 0; height: 12px; }
input[type=range]::-webkit-slider-runnable-track { height: 3px; border-radius: 2px; background: #6f6f6f; border-bottom: 1px solid #ccc; }
input[type=range]::-webkit-slider-thumb { appearance: none; width: 7px; height: 8px; margin-top: -3px; border-radius: 3px; border: 1px solid #666; background: #e8e8e8; }
.root { left: 42px; top: 174px; height: 142px; }
.c1 { left: 253px; }
.c2 { left: 260px; }
.c3 { left: 466px; }
.c4 { left: 471px; }
.t1 { top: -22px; }
.t2 { top: 22px; }
.tree1 { top: 129px; }
.tree2 { top: 314px; }
.tree3 { top: 497px; }
.a1 { top: 65px; }
.a2 { top: 108px; }
.a3 { top: 151px; }
.a4 { top: 194px; }
.b1 { top: 249px; }
.b2 { top: 292px; }
.b3 { top: 335px; }
.b4 { top: 378px; }
.d1 { top: 433px; }
.d2 { top: 476px; }
.d3 { top: 519px; }
.d4 { top: 562px; }

/* inspector */
.inspector { border-right: 0; border-bottom: 0; }
.ihead { display: flex; gap: 7px; height: 46px; padding: 6px 2px 0 8px; background: #dedede; border-top: 1px solid #828282; border-bottom: 1px solid #999; flex: none; }
.bt { width: 28px; height: 28px; }
.ihfields { flex: 1; min-width: 0; }
.irow { display: flex; align-items: center; height: 18px; gap: 7px; margin-top: -2px; }
.irow .help { width: 14px; height: 14px; }
.irow .text { height: 16px; padding: 0 2px; background: #d8d8d8; border: 1px solid #999; border-top: 2px solid #777; line-height: 12px; }
.irow + .irow { margin-top: 1px; padding-right: 4px; gap: 0; }
.btype { width: 80px; padding-left: 1px; }
.pick { position: relative; display: flex; align-items: center; }
.pick select { width: 100%; height: 15px; padding: 0 6px; font-size: 10px; line-height: 12px; background: linear-gradient(#ededed, #c4c4c4); border: 1px solid #777; border-radius: 3px; }
.pick svg { position: absolute; right: 5px; }
.pick.combo select { background: #d8d8d8; border-radius: 0; border-top: 2px solid #777; height: 16px; padding: 0 2px; font-size: 11px; }
.ibody { flex: 1; padding: 3px 4px 0 15px; min-height: 0; overflow: hidden; }
.field { display: grid; grid-template-columns: 181px minmax(0, 1fr); align-items: center; height: 18px; }
.cb { display: flex; padding-left: 1px; }
.chart { width: 100%; height: 40px; margin-top: 2px; }
.range { display: flex; justify-content: space-between; height: 20px; padding: 3px 6px 0 5px; font-size: 10px; }
.motions { display: flex; flex-direction: column; margin-top: 6px; height: 108px; background: #dedede; border: 1px solid #aaa; border-bottom: 2px solid #909090; border-radius: 4px; border-spacing: 0; }
.motions thead, .motions tbody { display: block; }
.motions tr { display: flex; align-items: center; height: 21px; }
.motions thead tr { height: 18px; border-bottom: 1px solid #aaa; }
.motions th { font-weight: normal; padding: 0; text-align: left; width: 89px; }
.motions th.mt { flex: 1; padding-left: 5px; }
.motions th.ck svg { margin-left: 30px; }
.motions th.mir { width: 21px; }
.motions td { padding: 0; flex: none; }
.motions .g { width: 18px; padding-left: 3px; }
.motions .m { flex: 1; min-width: 0; }
.obj { display: flex; align-items: center; gap: 2px; height: 16px; padding-left: 3px; background: #d8d8d8; border: 1px solid #999; border-top: 2px solid #777; white-space: nowrap; }
.cl { width: 10px; height: 11px; }
.motions .o { width: 26px; padding-left: 8px; }
.motions .n { width: 89px; }
.motions .n input { width: 81px; height: 16px; padding: 0 2px; background: #d8d8d8; border: 1px solid #999; border-top: 2px solid #777; display: block; line-height: 12px; }
.motions .x { width: 20px; display: flex; }
.motions .x input { opacity: .5; }
.mfoot { display: flex; width: 55px; height: 15px; margin: 0 0 12px auto; background: #dedede; border: 1px solid #999; border-top: 0; }
.mfoot button { flex: 1; display: grid; place-items: center; }
.darkbar { display: flex; align-items: center; height: 18px; padding-left: 5px; background: linear-gradient(#7a7a7a, #545454); border-top: 1px solid #444; color: #e4e4e4; font-weight: bold; flex: none; }
.labels { margin-bottom: 3px; }
.phead button { align-self: stretch; border-left: 1px solid #444; padding: 0 4px; }
.phead .on { background: #6a6a6a; padding: 0 5px; border-right: 1px solid #444; }
.spd { width: 20px; height: 12px; margin: 0 6px 0 4px; }
.speed { width: 64px; }
.speed::-webkit-slider-runnable-track { background: #2e2e2e; border-bottom-color: #777; }
.speed::-webkit-slider-thumb { background: #c8c8c8; height: 9px; width: 9px; border-radius: 5px; }
.phead output { width: 38px; color: #fff; padding-left: 5px; }
.pplay { height: 21px; background: linear-gradient(#333, #4a4a4a); flex: none; }
.pplay button { width: 34px; height: 21px; padding-left: 9px; background: linear-gradient(#8a8a8a, #ababab); border-right: 1px solid #ccc; }
.preview { position: relative; height: 182px; background: #303030; overflow: hidden; flex: none; }
.view { width: 100%; height: 100%; }
.frame { position: absolute; left: 0; right: 0; bottom: -2px; text-align: center; color: #fff; font-weight: bold; text-shadow: 0 1px 2px #000; }
.pav { position: absolute; right: 3px; bottom: 1px; width: 10px; height: 15px; }

/* project */
.project { display: flex; flex-direction: column; min-height: 0; background: #c2c2c2; }
.projbar { padding-right: 5px; }
.pf { width: 300px; margin: 1px 10px 0 auto; }
.pbtns { display: flex; }
.pbtns button { display: flex; align-items: center; justify-content: center; gap: 3px; width: 22px; border-left: 1px solid #888; font-size: 10px; }
.pbtns .hid { width: 41px; border-right: 1px solid #888; }
.psplit { flex: 1; display: grid; grid-template-columns: minmax(0, 252fr) minmax(0, 1668fr); min-height: 0; overflow: hidden; }
.folders { border-right: 1px solid #828282; overflow: hidden; }
.folders li { padding-left: 19px; }
.folders i { width: 10px; }
.folders .top0 { padding-left: 4px; gap: 3px; }
.folders .sel { background: #8f8f8f; color: #fff; }
.assets { display: flex; flex-direction: column; min-height: 0; }
.path { display: flex; align-items: center; gap: 7px; height: 18px; padding: 1px 0 0 5px; background: #dedede; border-bottom: 1px solid #999; flex: none; }
.path a { color: inherit; text-decoration: none; }
.gt { width: 6px; height: 8px; }
.lwrap { flex: 1; display: flex; min-height: 0; overflow: hidden; }
.files { flex: 1; margin-top: -3px; }
.files li { padding-left: 5px; gap: 2px; }
.files i { width: 10px; }
.files .kid { padding-left: 20px; }
.scroll { display: flex; flex-direction: column; align-items: center; gap: 7px; width: 15px; padding: 7px 0 2px; background: linear-gradient(90deg, #b0b0b0, #dcdcdc); border-left: 1px solid #888; }
.sa { width: 8px; height: 5px; }
.thumb { flex: 1; width: 13px; border: 1px solid #3f557c; border-radius: 6px; background: linear-gradient(90deg, #94a5c0, #637899); }
```
FILE: script.js
```js
// Draws the preview floor: two families of lines, each meeting at a vanishing point.
const floor = document.getElementById("floor");
const base = 848;

function family(vx, vy, start, step, from, to) {
  for (let k = from; k <= to; k++) {
    const bold = k % 20 === 0, medium = k % 5 === 0;
    const x = start + k * step;
    const t = 1.6;
    const line = document.createElementNS("http://www.w3.org/2000/svg", "line");
    line.setAttribute("x1", vx);
    line.setAttribute("y1", vy);
    line.setAttribute("x2", vx + (x - vx) * t);
    line.setAttribute("y2", vy + (base - vy) * t);
    line.setAttribute("stroke", bold ? "#8a8a8a" : medium ? "#7a7a7a" : "#5a5a5a");
    line.setAttribute("stroke-width", bold ? 7 : medium ? 4 : 3);
    floor.appendChild(line);
  }
}

family(1451, 174, 1295, 47, -100, 20);
family(-1170, 174, 608, 78, -20, 90);
```
